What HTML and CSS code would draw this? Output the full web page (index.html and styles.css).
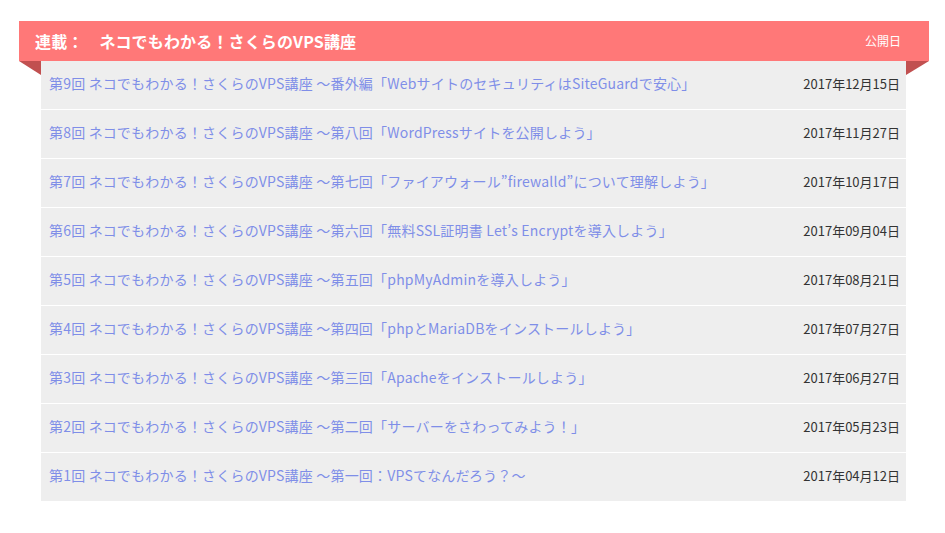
FILE: index.html
```html
<!DOCTYPE html>
<html lang="ja">
<head>
<meta charset="utf-8">
<title>連載：ネコでもわかる！さくらのVPS講座</title>
<link rel="stylesheet" href="styles.css">
</head>
<body>
<section class="series">
  <header class="series-head">
    <h2 class="series-title">連載：　ネコでもわかる！さくらのVPS講座</h2>
    <span class="series-date-label">公開日</span>
    <span class="fold fold-left"></span>
    <span class="fold fold-right"></span>
  </header>
  <ul class="series-list">
    <li class="item"><a class="item-link" href="#">第9回 ネコでもわかる！さくらのVPS講座 ～番外編「WebサイトのセキュリティはSiteGuardで安心」</a><span class="item-date">2017年12月15日</span></li>
    <li class="item"><a class="item-link" href="#">第8回 ネコでもわかる！さくらのVPS講座 ～第八回「WordPressサイトを公開しよう」</a><span class="item-date">2017年11月27日</span></li>
    <li class="item"><a class="item-link" href="#">第7回 ネコでもわかる！さくらのVPS講座 ～第七回「ファイアウォール”firewalld”について理解しよう」</a><span class="item-date">2017年10月17日</span></li>
    <li class="item"><a class="item-link" href="#">第6回 ネコでもわかる！さくらのVPS講座 ～第六回「無料SSL証明書 Let’s Encryptを導入しよう」</a><span class="item-date">2017年09月04日</span></li>
    <li class="item"><a class="item-link" href="#">第5回 ネコでもわかる！さくらのVPS講座 ～第五回「phpMyAdminを導入しよう」</a><span class="item-date">2017年08月21日</span></li>
    <li class="item"><a class="item-link" href="#">第4回 ネコでもわかる！さくらのVPS講座 ～第四回「phpとMariaDBをインストールしよう」</a><span class="item-date">2017年07月27日</span></li>
    <li class="item"><a class="item-link" href="#">第3回 ネコでもわかる！さくらのVPS講座 ～第三回「Apacheをインストールしよう」</a><span class="item-date">2017年06月27日</span></li>
    <li class="item"><a class="item-link" href="#">第2回 ネコでもわかる！さくらのVPS講座 ～第二回「サーバーをさわってみよう！」</a><span class="item-date">2017年05月23日</span></li>
    <li class="item"><a class="item-link" href="#">第1回 ネコでもわかる！さくらのVPS講座 ～第一回：VPSてなんだろう？～</a><span class="item-date">2017年04月12日</span></li>
  </ul>
</section>
</body>
</html>
```
FILE: styles.css
```css
* { box-sizing: border-box; }
html, body { margin: 0; padding: 0; background: #fff; }
body {
  font-family: "Noto Sans CJK JP", "Noto Sans", sans-serif;
  color: #333;
}
.series {
  padding: 21px 16px 0 19px;
}
.series-head {
  position: relative;
  height: 40px;
  background: #ff7878;
  display: flex;
  align-items: center;
  justify-content: space-between;
  padding: 0 28px 1px 16px;
  color: #fff;
}
.series-title {
  margin: 0;
  font-size: 16px;
  font-weight: bold;
  letter-spacing: 0.15px;
}
.series-date-label {
  font-size: 12px;
}
.fold {
  position: absolute;
  top: 40px;
  width: 22px;
  height: 14px;
  background: #c15050;
}
.fold-left {
  left: 0;
  clip-path: polygon(0 0, 100% 0, 100% 100%);
}
.fold-right {
  right: 0;
  width: 23px;
  clip-path: polygon(0 0, 100% 0, 0 100%);
}
.series-list {
  list-style: none;
  margin: 0 23px 0 22px;
  padding: 0;
}
.item {
  display: flex;
  align-items: center;
  justify-content: space-between;
  height: 49px;
  padding: 0 6px 4px 8px;
  background: #eeeeee;
  border-top: 1px solid #fff;
}
.item:first-child {
  height: 48px;
  border-top: 0;
}
.item-link {
  color: #7f8ee8;
  text-decoration: none;
  font-size: 14px;
  letter-spacing: 0.2px;
  white-space: nowrap;
}
.item-date {
  font-size: 13px;
  color: #333;
  white-space: nowrap;
}
```
